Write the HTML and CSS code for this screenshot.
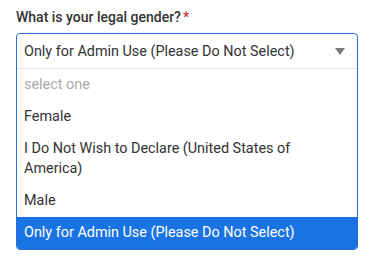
FILE: index.html
```html
<!DOCTYPE html>
<html lang="en">

<head>
    <meta charset="UTF-8">
    <meta name="viewport" content="width=device-width, initial-scale=1.0">
    <title>Legal gender</title>
    <link rel="stylesheet" href="styles.css">
</head>

<body>
    <div class="field">
        <div class="field-label">What is your legal gender?<span class="req">*</span></div>
        <!-- open select -->
        <div class="select open">
            <div class="select-current">
                <span>Only for Admin Use (Please Do Not Select)</span>
                <svg class="caret" width="10" height="7" viewBox="0 0 10 7"><path d="M0 0H10L5 7Z" fill="#7a7a7a"/></svg>
            </div>
            <ul class="select-list">
                <li class="placeholder">select one</li>
                <li>Female</li>
                <li>I Do Not Wish to Declare (United States of America)</li>
                <li>Male</li>
                <li class="active">Only for Admin Use (Please Do Not Select)</li>
            </ul>
        </div>
    </div>
</body>

</html>
```

FILE: styles.css
```css
body,
ul,
li,
div {
    margin: 0px;
    padding: 0px;
}

body {
    background: #ffffff;
    font-family: Roboto, "Liberation Sans", sans-serif;
    color: #333333;
}

.field {
    padding: 7px 0px 0px 16px;
    width: 342px;
}

.field-label {
    font-size: 14px;
    font-weight: 500;
    line-height: 20px;
    color: #333333;
    margin-bottom: 6px;
}

.req {
    color: #d0312d;
    margin-left: 2px;
}

.select {
    border: 1px solid #2a6fd6;
    border-radius: 4px;
    overflow: hidden;
}

.select-current {
    display: flex;
    align-items: center;
    justify-content: space-between;
    height: 34px;
    padding: 0px 12px 0px 7px;
    font-size: 14.4px;
    border-bottom: 1px solid #e6e6e6;
}

.caret {
    display: block;
}

.select-list {
    list-style: none;
}

.select-list li {
    padding: 6px 7px;
    font-size: 14.4px;
    line-height: 20px;
}

.select-list li.placeholder {
    color: #aaaaaa;
}

.select-list li.active {
    background: #1a73e3;
    color: #ffffff;
}
```
